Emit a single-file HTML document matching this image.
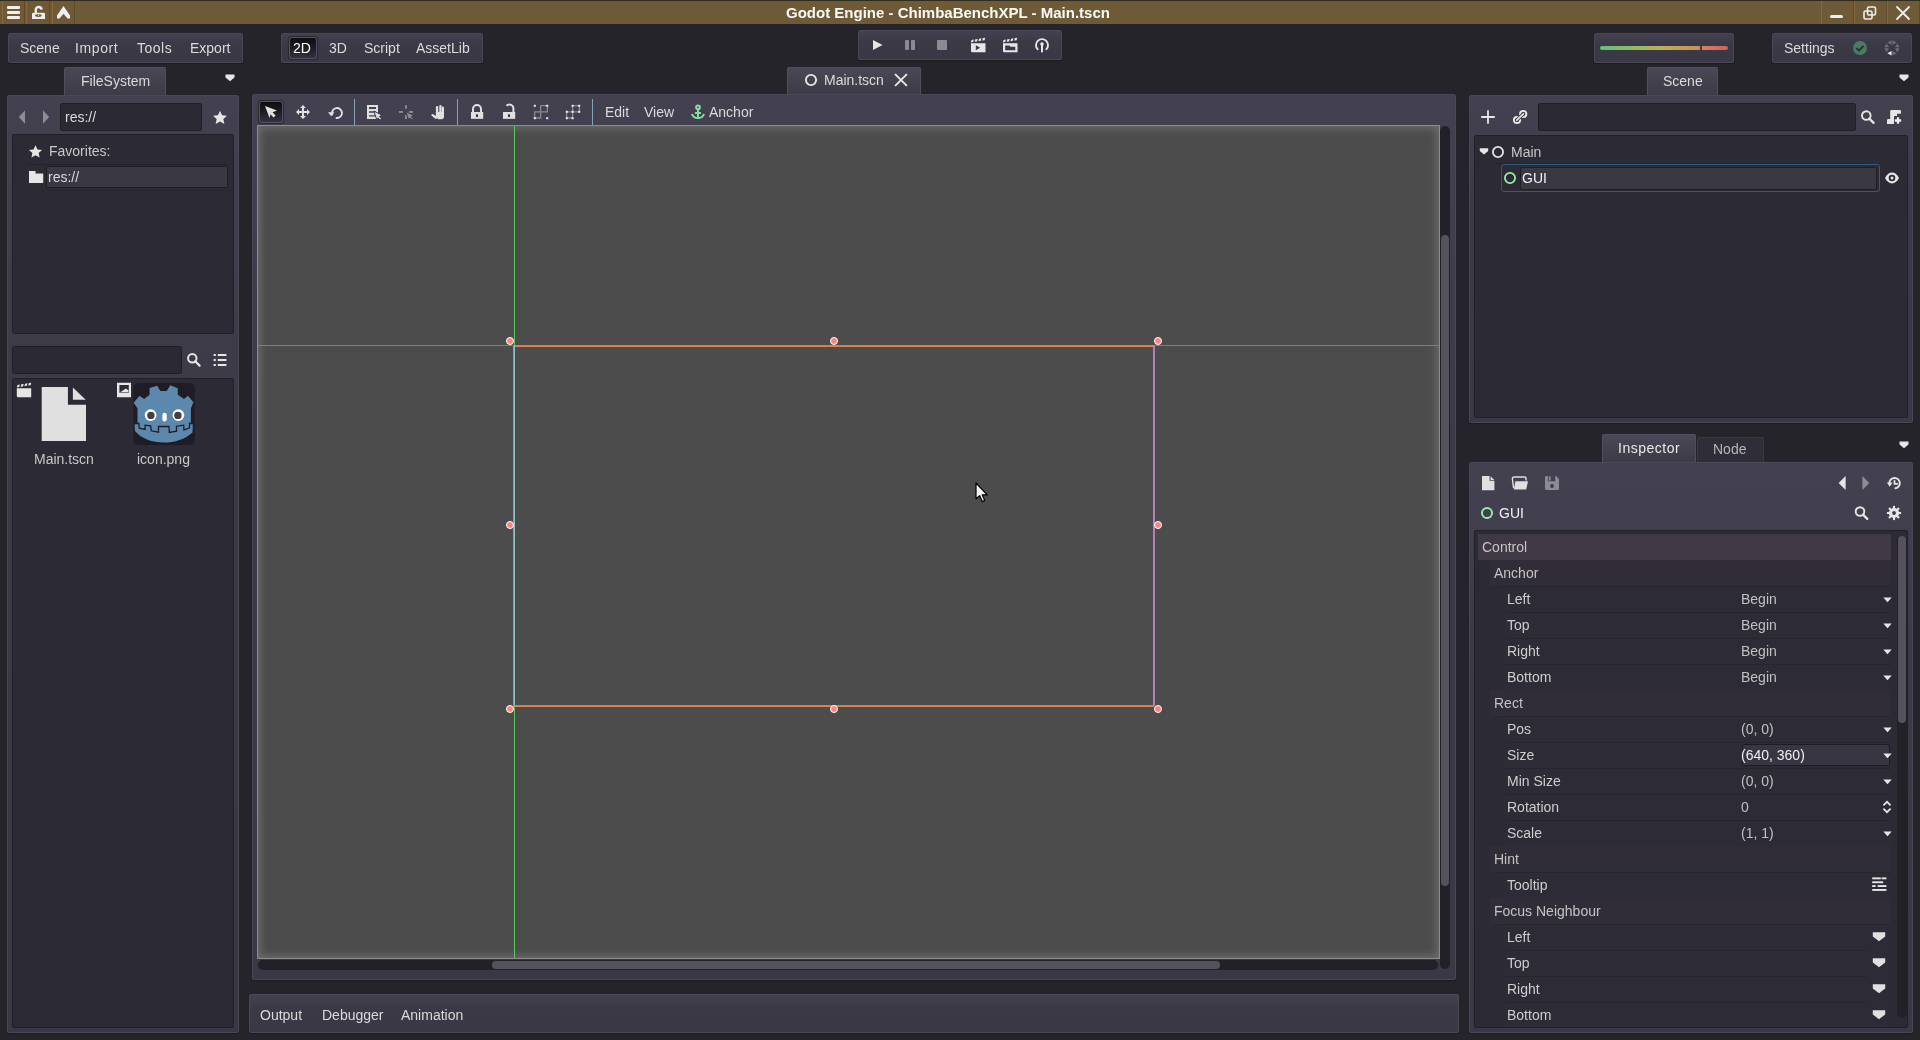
<!DOCTYPE html>
<html><head><meta charset="utf-8">
<style>
*{box-sizing:border-box}
html,body{margin:0;padding:0}
body{width:1920px;height:1040px;background:#25242a;position:relative;overflow:hidden;font-family:"Liberation Sans",sans-serif;font-size:14px;color:#dadada}
.a{position:absolute}
.t{position:absolute;line-height:16px;white-space:nowrap;z-index:3;will-change:transform}
.pnl{position:absolute;background:linear-gradient(#434050,#3c3946 40%,#3b3845);border:1px solid #4a4757;border-radius:2px;box-shadow:0 1px 1px #1c1b20}
.tab{position:absolute;background:linear-gradient(#4a4756,#3e3b48);border:1px solid #514e5e;border-bottom:none;border-radius:2px 2px 0 0}
.tree{position:absolute;background:#2c2a34;border:1px solid #222027;border-radius:2px}
.fld{position:absolute;background:#2b2933;border:1px solid #211f26;border-radius:2px}
.ibtn{position:absolute}
svg{position:absolute;overflow:visible;z-index:3}
.hd{position:absolute;width:8px;height:8px;border-radius:50%;background:#ff8282;border:1.3px solid #fff}
</style></head>
<body>
<!-- TITLE BAR -->
<div class="a" style="left:0;top:0;width:1920px;height:24px;background:#6e5a36;border-top:1px solid #2e2c1f"></div>
<div class="a" style="left:2px;top:1px;width:23px;height:23px;border-left:1px solid #86693c;border-right:1px solid #5c4a2c"></div>
<div class="a" style="left:26px;top:1px;width:24px;height:23px;border-left:1px solid #86693c;border-right:1px solid #5c4a2c"></div>
<div class="a" style="left:52px;top:1px;width:23px;height:23px;border-left:1px solid #86693c;border-right:1px solid #5c4a2c"></div>
<div class="a" style="left:1821px;top:1px;width:33px;height:23px;border-left:1px solid #86693c;border-right:1px solid #5c4a2c"></div>
<div class="a" style="left:1854px;top:1px;width:33px;height:23px;border-left:1px solid #86693c;border-right:1px solid #5c4a2c"></div>
<div class="a" style="left:1887px;top:1px;width:33px;height:23px;border-left:1px solid #86693c;border-right:1px solid #5c4a2c"></div>
<!-- hamburger -->
<div class="a" style="left:7px;top:6px;width:13px;height:3px;background:#eee;border-radius:1px"></div>
<div class="a" style="left:7px;top:11px;width:13px;height:3px;background:#eee;border-radius:1px"></div>
<div class="a" style="left:7px;top:16px;width:13px;height:3px;background:#eee;border-radius:1px"></div>
<!-- lock open -->
<svg style="left:32px;top:6px" width="14" height="14" viewBox="0 0 14 14"><path d="M3.8 7.5V3.6A2.6 2.6 0 0 1 6.4 1A3 3 0 0 1 9.6 3.6" fill="none" stroke="#eee" stroke-width="2.4"/><path d="M0 8.2A1.4 1.4 0 0 1 1.4 6.8H11.6A1.4 1.4 0 0 1 13 8.2V13H0Z" fill="#eee"/><ellipse cx="6.4" cy="9.6" rx="3.4" ry="1.3" fill="#6e5a36"/><circle cx="6.4" cy="9.6" r="0.6" fill="#eee"/></svg>
<!-- up arrow -->
<svg style="left:57px;top:6px" width="14" height="14" viewBox="0 0 14 14"><path d="M0 9.5L6.5 0L13 9.5V12.5H10.5L6.5 7.75L2.5 12.5H0Z" fill="#eee"/></svg>
<div class="t" style="left:786px;top:5px;font-weight:bold;font-size:15px;color:#fafafa">Godot Engine - ChimbaBenchXPL - Main.tscn</div>
<!-- window controls -->
<div class="a" style="left:1830px;top:15px;width:13px;height:3px;background:#eee;border-radius:2px"></div>
<svg style="left:1863px;top:6px" width="14" height="14" viewBox="0 0 14 14"><rect x="4.5" y="1" width="8" height="8" rx="1.5" fill="none" stroke="#eee" stroke-width="1.6"/><rect x="1" y="5" width="8" height="8" rx="1.5" fill="none" stroke="#eee" stroke-width="1.6"/></svg>
<svg style="left:1896px;top:6px" width="14" height="14" viewBox="0 0 14 14"><path d="M1 1L13 13M13 1L1 13" stroke="#eee" stroke-width="1.8" stroke-linecap="round"/></svg>

<!-- MENU ROW -->
<div class="pnl" style="left:8px;top:33px;width:235px;height:30px"></div>
<div class="t" style="left:20px;top:40px">Scene</div>
<div class="t" style="left:75px;top:40px;letter-spacing:0.6px">Import</div>
<div class="t" style="left:137px;top:40px;letter-spacing:0.5px">Tools</div>
<div class="t" style="left:190px;top:40px">Export</div>

<div class="pnl" style="left:281px;top:33px;width:202px;height:30px"></div>
<div class="a" style="left:289px;top:37px;width:28px;height:22px;background:linear-gradient(#0e0d11,#1b1a20 45%,#35323d);border:1px solid #54506a;border-radius:3px;box-shadow:0 0 1px 1px #2a2832"></div>
<div class="t" style="left:293px;top:40px;color:#fff">2D</div>
<div class="t" style="left:329px;top:40px">3D</div>
<div class="t" style="left:364px;top:40px">Script</div>
<div class="t" style="left:416px;top:40px">AssetLib</div>

<div class="pnl" style="left:858px;top:30px;width:204px;height:30px"></div>

<div class="pnl" style="left:1594px;top:33px;width:140px;height:30px"></div>
<div class="a" style="left:1600px;top:46px;width:100px;height:4px;border-radius:2px 0 0 2px;background:linear-gradient(90deg,#5fc27a,#b8b356 60%,#d3895a)"></div>
<div class="a" style="left:1702px;top:46px;width:26px;height:4px;border-radius:0 2px 2px 0;background:linear-gradient(90deg,#d3845a,#d2605e)"></div>

<div class="pnl" style="left:1772px;top:33px;width:140px;height:30px"></div>
<div class="t" style="left:1784px;top:40px">Settings</div>


<!-- PLAY ICONS -->
<svg style="left:872px;top:39px" width="12" height="12" viewBox="0 0 12 12"><path d="M1 1V11L10.5 6Z" fill="#e6e6e6"/></svg>
<div class="a" style="left:905px;top:40px;width:4px;height:10px;background:#8b8992;border-radius:1px"></div>
<div class="a" style="left:911px;top:40px;width:4px;height:10px;background:#8b8992;border-radius:1px"></div>
<div class="a" style="left:937px;top:40px;width:10px;height:10px;background:#8b8992;border-radius:1px"></div>
<svg style="left:970px;top:38px" width="16" height="16" viewBox="0 0 16 16"><g fill="#e6e6e6"><path d="M0.8 4.4L1.5 1.9L3.9 1.5L3.2 4Z M4.6 3.8L5.3 1.3L7.7 0.9L7 3.4Z M8.4 3.2L9.1 0.7L11.5 0.3L10.8 2.8Z M12.2 2.6L12.9 0.1L15.2 -0.2L14.6 2.2Z"/><path d="M1 5.2H15.5V14.2H2.2A1.2 1.2 0 0 1 1 13Z M5.8 7.2V12.2L10.2 9.7Z" fill-rule="evenodd"/></g></svg>
<svg style="left:1002px;top:38px" width="16" height="16" viewBox="0 0 16 16"><g fill="#e6e6e6"><path d="M0.8 4.4L1.5 1.9L3.9 1.5L3.2 4Z M4.6 3.8L5.3 1.3L7.7 0.9L7 3.4Z M8.4 3.2L9.1 0.7L11.5 0.3L10.8 2.8Z M12.2 2.6L12.9 0.1L15.2 -0.2L14.6 2.2Z"/><path d="M1 5.2H15.5V14.2H2.2A1.2 1.2 0 0 1 1 13Z M3.2 7.4V12.2H13.3V8.8H8.6L7.4 7.4Z" fill-rule="evenodd"/></g></svg>
<svg style="left:1034px;top:38px" width="16" height="16" viewBox="0 0 16 16"><path d="M3.6 11.2A6 6 0 1 1 12.4 11.2" fill="none" stroke="#e6e6e6" stroke-width="1.9" stroke-linecap="round"/><circle cx="8" cy="6" r="1.8" fill="#e6e6e6"/><rect x="7" y="6" width="2" height="8.6" rx="1" fill="#e6e6e6"/></svg>

<!-- settings icons -->
<svg style="left:1853px;top:41px" width="14" height="14" viewBox="0 0 14 14"><circle cx="7" cy="7" r="7" fill="#4a7b5e"/><path d="M3.4 7.2L5.9 9.6L10.6 4.8" fill="none" stroke="#2d2b33" stroke-width="1.8"/></svg>
<svg style="left:1880px;top:36px" width="30" height="24" viewBox="0 0 30 24"><path d="M7.40 6.60L11.54 4.30V8.90Z" fill="#6d6b77"/><path d="M16.60 6.60L12.46 4.30V8.90Z" fill="#6d6b77"/><path d="M6.60 7.20L4.30 11.34H8.90Z" fill="#6d6b77"/><path d="M17.30 7.20L15.00 11.34H19.60Z" fill="#6d6b77"/><path d="M6.60 16.40L4.30 12.26H8.90Z" fill="#6d6b77"/><path d="M17.30 16.40L15.00 12.26H19.60Z" fill="#6d6b77"/><path d="M7.40 17.20L11.54 14.90V19.50Z" fill="#eeeeee"/><path d="M16.60 17.20L12.46 14.90V19.50Z" fill="#6d6b77"/></svg>

<!-- dropdown arrows -->
<svg style="left:225px;top:74px" width="10" height="8" viewBox="0 0 10 8"><path d="M0.5 0.5H9.5V3.6L5 7.2L0.5 3.6Z" fill="#e6e6e6"/></svg>
<svg style="left:1899px;top:74px" width="10" height="8" viewBox="0 0 10 8"><path d="M0.5 0.5H9.5V3.6L5 7.2L0.5 3.6Z" fill="#e6e6e6"/></svg>
<svg style="left:1899px;top:441px" width="10" height="8" viewBox="0 0 10 8"><path d="M0.5 0.5H9.5V3.6L5 7.2L0.5 3.6Z" fill="#e6e6e6"/></svg>

<!-- tab icons -->
<svg style="left:804px;top:73px" width="14" height="14" viewBox="0 0 14 14"><circle cx="7" cy="7" r="5.1" fill="none" stroke="#e6e6e6" stroke-width="1.9"/></svg>
<svg style="left:894px;top:73px" width="14" height="14" viewBox="0 0 14 14"><path d="M1.6 1.6L12.4 12.4M12.4 1.6L1.6 12.4" stroke="#e6e6e6" stroke-width="1.9" stroke-linecap="round"/></svg>

<!-- DOCK TABS -->
<div class="tab" style="left:64px;top:67px;width:102px;height:28px"></div>
<div class="t" style="left:81px;top:73px">FileSystem</div>
<div class="tab" style="left:787px;top:67px;width:134px;height:27px"></div>
<div class="t" style="left:824px;top:72px">Main.tscn</div>
<div class="tab" style="left:1647px;top:67px;width:71px;height:28px"></div>
<div class="t" style="left:1663px;top:73px">Scene</div>

<!-- LEFT DOCK -->
<div class="pnl" style="left:7px;top:95px;width:232px;height:938px"></div>
<div class="fld" style="left:60px;top:103px;width:142px;height:28px"></div>
<div class="t" style="left:65px;top:109px">res://</div>
<div class="tree" style="left:12px;top:134px;width:222px;height:200px"></div>
<div class="t" style="left:49px;top:143px;color:#c8c8c8">Favorites:</div>
<div class="a" style="left:46px;top:166px;width:182px;height:22px;background:#3a3843;border:1px solid #1f1d25;border-radius:2px"></div>
<div class="t" style="left:48px;top:169px">res://</div>
<div class="fld" style="left:12px;top:346px;width:170px;height:28px"></div>
<div class="tree" style="left:12px;top:378px;width:222px;height:650px"></div>
<div class="t" style="left:34px;top:451px;color:#c8c8c8">Main.tscn</div>
<div class="t" style="left:137px;top:451px;color:#c8c8c8">icon.png</div>


<!-- LEFT DOCK ICONS -->
<svg style="left:18px;top:110px" width="8" height="14" viewBox="0 0 8 14"><path d="M7 0.2V13.8L0.8 7Z" fill="#8e8c94"/></svg>
<svg style="left:42px;top:110px" width="8" height="14" viewBox="0 0 8 14"><path d="M1 0.2V13.8L7.2 7Z" fill="#8e8c94"/></svg>
<svg style="left:212px;top:110px" width="16" height="15" viewBox="0 0 16 15"><path d="M8 0.8L10.1 5.3L15 5.8L11.3 9.1L12.4 14L8 11.5L3.6 14L4.7 9.1L1 5.8L5.9 5.3Z" fill="#e6e6e6"/></svg>
<svg style="left:28px;top:144px" width="15" height="15" viewBox="0 0 16 15"><path d="M8 0.8L10.1 5.3L15 5.8L11.3 9.1L12.4 14L8 11.5L3.6 14L4.7 9.1L1 5.8L5.9 5.3Z" fill="#e6e6e6"/></svg>
<svg style="left:28px;top:170px" width="16" height="14" viewBox="0 0 16 14"><path d="M1 1H7.5V3.5H15.2V13H1Z" fill="#e6e6e6"/></svg>
<div class="a" style="left:28px;top:164px;width:200px;height:1px;background:#25232b"></div>
<div class="a" style="left:28px;top:190px;width:200px;height:1px;background:#2a2830"></div>
<svg style="left:186px;top:352px" width="16" height="16" viewBox="0 0 16 16"><circle cx="6.3" cy="6.3" r="4.2" fill="none" stroke="#e6e6e6" stroke-width="2"/><path d="M9.2 9.2L13.6 13.6" stroke="#e6e6e6" stroke-width="2.2" stroke-linecap="round"/></svg>
<svg style="left:212px;top:352px" width="16" height="16" viewBox="0 0 16 16"><g fill="#e6e6e6"><rect x="1.6" y="2" width="2.2" height="2"/><rect x="5.8" y="2" width="8.6" height="2"/><rect x="1.6" y="7" width="2.2" height="2"/><rect x="5.8" y="7" width="8.6" height="2"/><rect x="1.6" y="12" width="2.2" height="2"/><rect x="5.8" y="12" width="8.6" height="2"/></g></svg>
<!-- files -->
<svg style="left:16px;top:383px" width="16" height="15" viewBox="0 0 16 15"><g fill="#e6e6e6"><path d="M0.8 4.4L1.5 1.9L3.9 1.5L3.2 4Z M4.6 3.8L5.3 1.3L7.7 0.9L7 3.4Z M8.4 3.2L9.1 0.7L11.5 0.3L10.8 2.8Z M12.2 2.6L12.9 0.1L15.2 -0.2L14.6 2.2Z"/><path d="M0.8 5.2H15.2V14.3H2.2A1.4 1.4 0 0 1 0.8 12.9Z"/></g></svg>
<svg style="left:41px;top:386px" width="46" height="56" viewBox="0 0 46 56"><path d="M0.7 1H26.9V18.7H45V55H0.7Z" fill="#e0e0e0"/><path d="M31.9 1.4V13.8H44.7Z" fill="#e0e0e0"/></svg>
<svg style="left:116px;top:382px" width="16" height="16" viewBox="0 0 16 16"><path d="M1 0.8H15V15.3H1Z M3.4 3V10.8H12.8V3Z" fill="#e6e6e6" fill-rule="evenodd"/><path d="M4.2 10.2L9.8 6.4L12.4 8.2V10.2Z" fill="#e6e6e6"/></svg>
<svg style="left:133px;top:383px" width="62" height="62" viewBox="0 0 62 62"><rect x="0.3" y="0" width="61.4" height="62" rx="5.5" fill="#1f1c25"/>
<path d="M16.6 5L24.2 2.7L27.4 7.9H33.7L37.3 2.3L44.8 5.3V11.8L51 16.1L54.9 12.8L60.5 19.3L57.9 25.2V40.3L59.8 40.9L59.5 49.4C52 56 42 59.6 30.7 59.6C19 59.6 9 56 1.9 48.1L1.6 40.9L4.5 40.3V25.2L0.6 19.7L6.5 12.8L11.1 16.1L16.6 11.8Z" fill="#5c88ad"/>
<path d="M1.6 40.9L5.9 40.3L6.2 45.2L12.1 46.5L12.1 42.2L17.6 42.9L18.3 47.8L25.5 49.1L25.5 43.5L36 43.5L36.3 49.4L43.5 48.1L43.5 43.2L50.7 42.2L51 47.1L56.5 44.8L56.5 40.3L59.8 40.9" fill="none" stroke="#1f1c25" stroke-width="1.3"/>
<circle cx="17.6" cy="32.1" r="5.9" fill="#fff"/><circle cx="17.9" cy="32.4" r="3.7" fill="#414042"/>
<circle cx="45.4" cy="32.1" r="5.9" fill="#fff"/><circle cx="44.9" cy="32.4" r="3.7" fill="#414042"/>
<rect x="29.4" y="29.8" width="4.3" height="8.8" rx="2.1" fill="#fff"/></svg>

<!-- CENTER -->
<div class="pnl" style="left:252px;top:94px;width:1204px;height:886px"></div>
<div class="a" style="left:259px;top:101px;width:24px;height:22px;background:linear-gradient(#0e0d11,#1b1a20 45%,#35323d);border:1px solid #54506a;border-radius:3px;box-shadow:0 0 1px 1px #2a2832"></div>
<div class="t" style="left:605px;top:104px">Edit</div>
<div class="t" style="left:644px;top:104px">View</div>
<div class="t" style="left:709px;top:104px">Anchor</div>
<div id="vp" class="a" style="left:257px;top:125px;width:1183px;height:834px;background:#4c4c4c;border:1px solid #8c8c8c;box-shadow:inset 0 0 9px 2px rgba(125,125,125,0.7)"></div>
<!-- scrollbars -->
<div class="a" style="left:1440px;top:126px;width:10px;height:843px;background:#222127;border-radius:5px"></div>
<div class="a" style="left:1441px;top:235px;width:8px;height:651px;background:#55525e;border-radius:4px"></div>
<div class="a" style="left:258px;top:960px;width:1180px;height:10px;background:#222127;border-radius:5px"></div>
<div class="a" style="left:492px;top:961px;width:728px;height:8px;background:#55525e;border-radius:4px"></div>


<!-- TOOLBAR ICONS -->
<svg style="left:263px;top:104px" width="16" height="16" viewBox="0 0 16 16"><path d="M2 2L14 6.5L9.6 8.3L12.6 11.4L10.5 13.4L7.6 10.3L6.5 14Z" fill="#e0e0e0"/></svg>
<svg style="left:295px;top:104px" width="16" height="16" viewBox="0 0 16 16"><path d="M8 1L11 4H9V7H12V5L15 8L12 11V9H9V12H11L8 15L5 12H7V9H4V11L1 8L4 5V7H7V4H5Z" fill="#e0e0e0"/></svg>
<svg style="left:327px;top:104px" width="16" height="16" viewBox="0 0 16 16"><path d="M5.2 10.5A5 5 0 1 1 9.5 14" fill="none" stroke="#e0e0e0" stroke-width="1.9" stroke-linecap="round"/><path d="M1 8.2H7.4L4.2 12.2Z" fill="#e0e0e0"/></svg>
<div class="a" style="left:354px;top:99px;width:1px;height:26px;background:#84a3b8"></div>
<svg style="left:366px;top:104px" width="16" height="16" viewBox="0 0 16 16"><path d="M1 1H12V15H1Z M3 3V5H10V3Z M3 7.3V8.7H10V7.3Z M3 11.2V12.6H10V11.2Z" fill="#e0e0e0" fill-rule="evenodd"/><path d="M7.8 7L16.2 11.3L13.4 12.5L15.4 14.5L14 15.9L12 13.9L11 16.4Z" fill="#e0e0e0" stroke="#3d3a47" stroke-width="1" stroke-linejoin="round"/></svg>
<svg style="left:398px;top:104px" width="16" height="16" viewBox="0 0 16 16"><g fill="#8d8b93"><rect x="7" y="1.2" width="1.9" height="3.5"/><rect x="0.9" y="7" width="4" height="1.9"/><rect x="11" y="7" width="4" height="1.9"/><rect x="7" y="11.2" width="1.9" height="3.8"/></g><path d="M7.8 7.6L16 11.6L13.2 12.7L15.2 14.7L13.9 16L11.9 14L10.9 16.6Z" fill="#8d8b93" stroke="#3d3a47" stroke-width="0.9" stroke-linejoin="round"/></svg>
<svg style="left:430px;top:104px" width="16" height="16" viewBox="0 0 16 16"><g fill="#e0e0e0"><rect x="5.9" y="2" width="2.4" height="9" rx="1.1"/><rect x="9.3" y="1" width="2.3" height="10" rx="1.1"/><rect x="11.8" y="2.6" width="2.2" height="9" rx="1.1"/><path d="M5.9 8H14V12.6A2.6 2.6 0 0 1 11.4 15.2H8.2L5.9 13Z"/><path d="M1.4 11.6A1.2 1.2 0 0 1 3.2 10.2L6.8 12.6V14.8L5.6 15Z"/></g></svg>
<div class="a" style="left:457px;top:99px;width:1px;height:26px;background:#84a3b8"></div>
<svg style="left:469px;top:104px" width="16" height="16" viewBox="0 0 16 16"><path d="M4 8.5V5a4 4 0 0 1 8 0V8.5" fill="none" stroke="#e0e0e0" stroke-width="2"/><rect x="2" y="8" width="12.2" height="6.8" fill="#e0e0e0"/><rect x="7" y="10.4" width="2" height="2.5" fill="#2a2830"/></svg>
<svg style="left:501px;top:104px" width="16" height="16" viewBox="0 0 16 16"><path d="M5.5 1.8A4 4 0 0 1 12.4 5V8.5" fill="none" stroke="#e0e0e0" stroke-width="2"/><rect x="2" y="8" width="12.2" height="6.8" fill="#e0e0e0"/><rect x="7" y="10.4" width="2" height="2.5" fill="#2a2830"/></svg>
<svg style="left:533px;top:104px" width="16" height="16" viewBox="0 0 16 16"><g fill="none" stroke="#8b8a90" stroke-width="1.3"><path d="M7.6 1.6H14.4V7.8H1.6V14H7.6V1.6"/></g><g fill="#f0f0f0"><rect x="0.8" y="0.8" width="2" height="2"/><rect x="13.2" y="0.8" width="2" height="2"/><rect x="0.8" y="13.2" width="2" height="2"/><rect x="13.2" y="13.2" width="2" height="2"/></g></svg>
<svg style="left:565px;top:104px" width="16" height="16" viewBox="0 0 16 16"><g fill="none" stroke="#8b8a90" stroke-width="1.3"><path d="M7.6 1.6H14.4V7.8H1.6V14H7.6V1.6"/></g><g fill="#f0f0f0"><rect x="6.6" y="0.8" width="2" height="2"/><rect x="13.2" y="0.8" width="2" height="2"/><rect x="0.8" y="6.8" width="2" height="2"/><rect x="6.6" y="6.8" width="2" height="2"/><rect x="13.2" y="6.8" width="2" height="2"/><rect x="0.8" y="13.2" width="2" height="2"/><rect x="6.6" y="13.2" width="2" height="2"/></g></svg>
<div class="a" style="left:592px;top:99px;width:1px;height:26px;background:#84a3b8"></div>
<svg style="left:690px;top:104px" width="16" height="16" viewBox="0 0 16 16"><g fill="none" stroke="#84e0a2" stroke-width="2"><circle cx="8" cy="3.3" r="1.9"/><path d="M8 5.2V14.6M5 9H11M2 10A6.2 5.5 0 0 0 14 10"/></g></svg>

<!-- VIEWPORT CONTENT -->
<div class="a" style="left:258px;top:345px;width:1181px;height:1px;background:#d45b5b"></div>
<div class="a" style="left:514px;top:126px;width:1px;height:832px;background:#5cc85c"></div>
<div class="a" style="left:513px;top:346px;width:641px;height:361px;border:1px solid #d9864f"></div>
<div class="a" style="left:514px;top:345px;width:641px;height:361px;border:1px solid #b27ab6;border-left-color:#8dc0c8"></div>
<div class="hd" style="left:506px;top:337px"></div>
<div class="hd" style="left:830px;top:337px"></div>
<div class="hd" style="left:1154px;top:337px"></div>
<div class="hd" style="left:506px;top:521px"></div>
<div class="hd" style="left:1154px;top:521px"></div>
<div class="hd" style="left:506px;top:705px"></div>
<div class="hd" style="left:830px;top:705px"></div>
<div class="hd" style="left:1154px;top:705px"></div>
<svg style="left:975px;top:482px" width="14" height="22" viewBox="0 0 14 22"><path d="M1 1V17L4.6 13.6L7.3 19.6L9.7 18.5L7.2 12.8H12.2Z" fill="#f4f4f4" stroke="#000" stroke-width="1.2" stroke-linejoin="round"/></svg>

<!-- BOTTOM PANEL -->
<div class="pnl" style="left:249px;top:994px;width:1210px;height:39px"></div>
<div class="t" style="left:260px;top:1007px">Output</div>
<div class="t" style="left:322px;top:1007px">Debugger</div>
<div class="t" style="left:401px;top:1007px">Animation</div>

<!-- RIGHT: SCENE DOCK -->
<div class="pnl" style="left:1469px;top:95px;width:444px;height:328px"></div>
<div class="fld" style="left:1538px;top:103px;width:318px;height:28px"></div>
<div class="tree" style="left:1474px;top:135px;width:434px;height:283px"></div>
<div class="t" style="left:1511px;top:144px;color:#c8c8c8">Main</div>
<div class="a" style="left:1501px;top:164px;width:379px;height:28px;border:1px solid #2e5b85;border-radius:3px"></div>
<div class="a" style="left:1520px;top:167px;width:357px;height:23px;background:#3a3843;border:1px solid #1f1d25;border-radius:2px"></div>
<div class="t" style="left:1522px;top:170px;color:#f2f2f2">GUI</div>

<!-- INSPECTOR TABS -->
<div class="tab" style="left:1602px;top:434px;width:94px;height:28px"></div>
<div class="t" style="left:1618px;top:440px;letter-spacing:0.5px;color:#e8e8e8">Inspector</div>
<div class="a" style="left:1697px;top:437px;width:67px;height:25px;background:#2f2d38;border:1px solid #3a3844;border-bottom:none;border-radius:2px 2px 0 0"></div>
<div class="t" style="left:1713px;top:441px;color:#b6b6b6">Node</div>

<!-- INSPECTOR -->
<div class="pnl" style="left:1469px;top:462px;width:444px;height:571px"></div>
<div class="t" style="left:1499px;top:505px;color:#f2f2f2">GUI</div>
<div class="tree" style="left:1474px;top:530px;width:434px;height:498px"></div>

<!-- SCENE DOCK ICONS -->
<svg style="left:1480px;top:109px" width="16" height="16" viewBox="0 0 16 16"><path d="M8 1.2V14.8M1.2 8H14.8" stroke="#e6e6e6" stroke-width="1.8"/></svg>
<svg style="left:1512px;top:109px" width="16" height="16" viewBox="0 0 16 16"><g fill="none"><circle cx="11.2" cy="5" r="3.1" stroke="#e6e6e6" stroke-width="2"/><circle cx="5" cy="11" r="3.1" stroke="#e6e6e6" stroke-width="2"/><path d="M4.8 11.2L11.4 4.8" stroke="#3e3b48" stroke-width="3.4" stroke-linecap="round"/><path d="M4.8 11.2L11.4 4.8" stroke="#e6e6e6" stroke-width="1.7" stroke-linecap="round"/></g></svg>
<svg style="left:1859px;top:109px" width="16" height="16" viewBox="0 0 16 16"><circle cx="7.3" cy="6.5" r="4.3" fill="none" stroke="#e6e6e6" stroke-width="1.9"/><path d="M10.3 9.6L14.6 13.9" stroke="#e6e6e6" stroke-width="2.2" stroke-linecap="round"/></svg>
<svg style="left:1886px;top:108px" width="18" height="18" viewBox="0 0 18 18"><g fill="#e6e6e6"><path d="M4.2 3.2A1.2 1.2 0 0 1 5.4 2H13.9A1.1 1.1 0 0 1 15 3.1V5.8H11V8H8V16H1V12.2A1.2 1.2 0 0 1 2.2 11H4.2Z"/></g><path d="M12 8.6V16.4M8.1 12.5H15.9" stroke="#3d3a47" stroke-width="4.6"/><path d="M12 9.3V15.7M8.8 12.5H15.2" stroke="#eeeeee" stroke-width="2.3"/></svg>
<svg style="left:1479px;top:147px" width="10" height="9" viewBox="0 0 10 9"><path d="M0.8 1.2H9.2V4L5 7.6L0.8 4Z" fill="#e6e6e6"/></svg>
<svg style="left:1491px;top:145px" width="14" height="14" viewBox="0 0 14 14"><circle cx="7" cy="7" r="5.1" fill="none" stroke="#e6e6e6" stroke-width="1.8"/></svg>
<div class="a" style="left:1495px;top:163px;width:370px;height:1px;background:#25232b"></div>
<svg style="left:1503px;top:171px" width="14" height="14" viewBox="0 0 14 14"><circle cx="7" cy="7" r="5.1" fill="none" stroke="#96efa9" stroke-width="1.8"/></svg>
<svg style="left:1884px;top:171px" width="16" height="14" viewBox="0 0 16 14"><path d="M1 7C3 3.2 5.4 1.6 8 1.6S13 3.2 15 7C13 10.8 10.6 12.4 8 12.4S3 10.8 1 7Z" fill="#e6e6e6"/><circle cx="8" cy="7" r="3.3" fill="#2b2932"/><circle cx="8" cy="7" r="1.5" fill="#e6e6e6"/></svg>

<!-- INSPECTOR ICONS -->
<svg style="left:1481px;top:475px" width="15" height="16" viewBox="0 0 15 16"><path d="M1 1H8.6V5.8H13.4V15.2H1Z" fill="#e0e0e0"/><path d="M9.6 1.3L13.3 4.9H9.6Z" fill="#e0e0e0"/></svg>
<svg style="left:1511px;top:475px" width="18" height="16" viewBox="0 0 18 16"><path d="M2.6 13.2L1.4 3.8A1.6 1.6 0 0 1 3 2H13.5A1.4 1.4 0 0 1 15 3.4V5.4" fill="none" stroke="#e0e0e0" stroke-width="1.4"/><path d="M4.4 6.2H17L15.2 14.6H2.8Z" fill="#e0e0e0"/></svg>
<svg style="left:1544px;top:475px" width="16" height="16" viewBox="0 0 16 16"><path d="M1 2.4A1.5 1.5 0 0 1 2.5 0.9H12L15 3.9V13.6A1.5 1.5 0 0 1 13.5 15.1H2.5A1.5 1.5 0 0 1 1 13.6Z M3.9 0.9V6.3H11.2V0.9Z" fill="#8d8b93" fill-rule="evenodd"/><rect x="4.8" y="1.4" width="1.8" height="4.2" fill="#8d8b93"/><circle cx="8" cy="11" r="1.9" fill="#3d3a47"/></svg>
<svg style="left:1837px;top:475px" width="10" height="16" viewBox="0 0 10 16"><path d="M8.6 1V15L1.6 8Z" fill="#e6e6e6"/></svg>
<svg style="left:1861px;top:475px" width="10" height="16" viewBox="0 0 10 16"><path d="M1.4 1V15L8.4 8Z" fill="#8d8b93"/></svg>
<svg style="left:1886px;top:475px" width="16" height="16" viewBox="0 0 16 16"><path d="M3.4 7.6A5.2 5.2 0 1 1 9.4 13.3" fill="none" stroke="#e6e6e6" stroke-width="1.9" stroke-linecap="round"/><path d="M0.9 7.5H6.5L3.7 11.8Z" fill="#e6e6e6"/><path d="M8.5 5.2V8.8H11.8" fill="none" stroke="#e6e6e6" stroke-width="1.8"/></svg>
<svg style="left:1480px;top:506px" width="14" height="14" viewBox="0 0 14 14"><circle cx="7" cy="7" r="5.05" fill="none" stroke="#96efa9" stroke-width="1.9"/></svg>
<svg style="left:1853px;top:505px" width="16" height="16" viewBox="0 0 16 16"><circle cx="7" cy="6.5" r="4.3" fill="none" stroke="#e6e6e6" stroke-width="1.9"/><path d="M10 9.6L14.3 13.9" stroke="#e6e6e6" stroke-width="2.2" stroke-linecap="round"/></svg>
<svg style="left:1886px;top:505px" width="16" height="16" viewBox="0 0 16 16"><circle cx="8" cy="8" r="5.1" fill="#e6e6e6"/><rect x="6.95" y="0.9000000000000004" width="2.1" height="4" fill="#e6e6e6" transform="rotate(0 8 8)"/><rect x="6.95" y="0.9000000000000004" width="2.1" height="4" fill="#e6e6e6" transform="rotate(45 8 8)"/><rect x="6.95" y="0.9000000000000004" width="2.1" height="4" fill="#e6e6e6" transform="rotate(90 8 8)"/><rect x="6.95" y="0.9000000000000004" width="2.1" height="4" fill="#e6e6e6" transform="rotate(135 8 8)"/><rect x="6.95" y="0.9000000000000004" width="2.1" height="4" fill="#e6e6e6" transform="rotate(180 8 8)"/><rect x="6.95" y="0.9000000000000004" width="2.1" height="4" fill="#e6e6e6" transform="rotate(225 8 8)"/><rect x="6.95" y="0.9000000000000004" width="2.1" height="4" fill="#e6e6e6" transform="rotate(270 8 8)"/><rect x="6.95" y="0.9000000000000004" width="2.1" height="4" fill="#e6e6e6" transform="rotate(315 8 8)"/><circle cx="8" cy="8" r="1.9" fill="#3d3a47"/></svg>
<!-- PROPERTY LIST -->
<div class="a" style="left:1475px;top:531px;width:433px;height:496px;overflow:hidden;z-index:1">
<div class="a" style="left:3px;top:3px;width:413px;height:26px;background:#3f3946"></div>
<div class="t" style="left:7px;top:8px;color:#c4c4c4">Control</div>
<div class="a" style="left:15px;top:29px;width:401px;height:26px;background:#302d38"></div>
<div class="t" style="left:19px;top:34px;color:#c4c4c4">Anchor</div>
<div class="a" style="left:27px;top:55px;width:389px;height:26px;background:#2d2b35"></div>
<div class="a" style="left:19px;top:55px;width:397px;height:1px;background:#27252d"></div>
<div class="t" style="left:32px;top:60px;color:#cdcdcd">Left</div>
<div class="t" style="left:266px;top:60px;color:#c0c0c0">Begin</div>
<svg style="left:408px;top:66px" width="9" height="6" viewBox="0 0 9 6"><path d="M0.3 0.6H8.7L4.5 5.2Z" fill="#e6e6e6"/></svg>
<div class="a" style="left:27px;top:81px;width:389px;height:26px;background:#2d2b35"></div>
<div class="a" style="left:31px;top:81px;width:385px;height:1px;background:#27252d"></div>
<div class="t" style="left:32px;top:86px;color:#cdcdcd">Top</div>
<div class="t" style="left:266px;top:86px;color:#c0c0c0">Begin</div>
<svg style="left:408px;top:92px" width="9" height="6" viewBox="0 0 9 6"><path d="M0.3 0.6H8.7L4.5 5.2Z" fill="#e6e6e6"/></svg>
<div class="a" style="left:27px;top:107px;width:389px;height:26px;background:#2d2b35"></div>
<div class="a" style="left:31px;top:107px;width:385px;height:1px;background:#27252d"></div>
<div class="t" style="left:32px;top:112px;color:#cdcdcd">Right</div>
<div class="t" style="left:266px;top:112px;color:#c0c0c0">Begin</div>
<svg style="left:408px;top:118px" width="9" height="6" viewBox="0 0 9 6"><path d="M0.3 0.6H8.7L4.5 5.2Z" fill="#e6e6e6"/></svg>
<div class="a" style="left:27px;top:133px;width:389px;height:26px;background:#2d2b35"></div>
<div class="a" style="left:31px;top:133px;width:385px;height:1px;background:#27252d"></div>
<div class="t" style="left:32px;top:138px;color:#cdcdcd">Bottom</div>
<div class="t" style="left:266px;top:138px;color:#c0c0c0">Begin</div>
<svg style="left:408px;top:144px" width="9" height="6" viewBox="0 0 9 6"><path d="M0.3 0.6H8.7L4.5 5.2Z" fill="#e6e6e6"/></svg>
<div class="a" style="left:15px;top:159px;width:401px;height:26px;background:#302d38"></div>
<div class="t" style="left:19px;top:164px;color:#c4c4c4">Rect</div>
<div class="a" style="left:27px;top:185px;width:389px;height:26px;background:#2d2b35"></div>
<div class="a" style="left:19px;top:185px;width:397px;height:1px;background:#27252d"></div>
<div class="t" style="left:32px;top:190px;color:#cdcdcd">Pos</div>
<div class="t" style="left:266px;top:190px;color:#c0c0c0">(0, 0)</div>
<svg style="left:408px;top:196px" width="9" height="6" viewBox="0 0 9 6"><path d="M0.3 0.6H8.7L4.5 5.2Z" fill="#e6e6e6"/></svg>
<div class="a" style="left:27px;top:211px;width:389px;height:26px;background:#2d2b35"></div>
<div class="a" style="left:31px;top:211px;width:385px;height:1px;background:#27252d"></div>
<div class="t" style="left:32px;top:216px;color:#cdcdcd">Size</div>
<div class="a" style="left:267px;top:213px;width:148px;height:22px;background:#393643;border:1px solid #1d1c22;border-radius:2px"></div>
<div class="t" style="left:266px;top:216px;color:#f0f0f0">(640, 360)</div>
<svg style="left:408px;top:222px" width="9" height="6" viewBox="0 0 9 6"><path d="M0.3 0.6H8.7L4.5 5.2Z" fill="#e6e6e6"/></svg>
<div class="a" style="left:27px;top:237px;width:389px;height:26px;background:#2d2b35"></div>
<div class="a" style="left:31px;top:237px;width:385px;height:1px;background:#27252d"></div>
<div class="t" style="left:32px;top:242px;color:#cdcdcd">Min Size</div>
<div class="t" style="left:266px;top:242px;color:#c0c0c0">(0, 0)</div>
<svg style="left:408px;top:248px" width="9" height="6" viewBox="0 0 9 6"><path d="M0.3 0.6H8.7L4.5 5.2Z" fill="#e6e6e6"/></svg>
<div class="a" style="left:27px;top:263px;width:389px;height:26px;background:#2d2b35"></div>
<div class="a" style="left:31px;top:263px;width:385px;height:1px;background:#27252d"></div>
<div class="t" style="left:32px;top:268px;color:#cdcdcd">Rotation</div>
<div class="t" style="left:266px;top:268px;color:#c0c0c0">0</div>
<svg style="left:407px;top:269px" width="10" height="14" viewBox="0 0 10 14"><path d="M1.4 5.4L5 1.8L8.6 5.4M1.4 8.6L5 12.2L8.6 8.6" fill="none" stroke="#e6e6e6" stroke-width="1.7"/></svg>
<div class="a" style="left:27px;top:289px;width:389px;height:26px;background:#2d2b35"></div>
<div class="a" style="left:31px;top:289px;width:385px;height:1px;background:#27252d"></div>
<div class="t" style="left:32px;top:294px;color:#cdcdcd">Scale</div>
<div class="t" style="left:266px;top:294px;color:#c0c0c0">(1, 1)</div>
<svg style="left:408px;top:300px" width="9" height="6" viewBox="0 0 9 6"><path d="M0.3 0.6H8.7L4.5 5.2Z" fill="#e6e6e6"/></svg>
<div class="a" style="left:15px;top:315px;width:401px;height:26px;background:#302d38"></div>
<div class="t" style="left:19px;top:320px;color:#c4c4c4">Hint</div>
<div class="a" style="left:27px;top:341px;width:389px;height:26px;background:#2d2b35"></div>
<div class="a" style="left:19px;top:341px;width:397px;height:1px;background:#27252d"></div>
<div class="t" style="left:32px;top:346px;color:#cdcdcd">Tooltip</div>
<svg style="left:397px;top:346px" width="15" height="16" viewBox="0 0 15 16"><g fill="#e6e6e6"><rect x="0.2" y="0.4" width="8.6" height="1.9"/><rect x="9.6" y="0.4" width="4.8" height="1.9"/><rect x="0.2" y="4.3" width="11" height="1.9"/><rect x="0.2" y="8.1" width="3.4" height="1.9"/><rect x="5.6" y="8.1" width="8.8" height="1.9"/><rect x="0.2" y="12" width="14.2" height="1.9"/></g></svg>
<div class="a" style="left:15px;top:367px;width:401px;height:26px;background:#302d38"></div>
<div class="t" style="left:19px;top:372px;color:#c4c4c4">Focus Neighbour</div>
<div class="a" style="left:27px;top:393px;width:389px;height:26px;background:#2d2b35"></div>
<div class="a" style="left:19px;top:393px;width:397px;height:1px;background:#27252d"></div>
<div class="t" style="left:32px;top:398px;color:#cdcdcd">Left</div>
<svg style="left:397px;top:400px" width="14" height="11" viewBox="0 0 14 11"><path d="M0.8 1.2H13.2V5.4L7 10.2L0.8 5.4Z" fill="#e0e0e0"/></svg>
<div class="a" style="left:27px;top:419px;width:389px;height:26px;background:#2d2b35"></div>
<div class="a" style="left:31px;top:419px;width:361px;height:1px;background:#27252d"></div>
<div class="t" style="left:32px;top:424px;color:#cdcdcd">Top</div>
<svg style="left:397px;top:426px" width="14" height="11" viewBox="0 0 14 11"><path d="M0.8 1.2H13.2V5.4L7 10.2L0.8 5.4Z" fill="#e0e0e0"/></svg>
<div class="a" style="left:27px;top:445px;width:389px;height:26px;background:#2d2b35"></div>
<div class="a" style="left:31px;top:445px;width:361px;height:1px;background:#27252d"></div>
<div class="t" style="left:32px;top:450px;color:#cdcdcd">Right</div>
<svg style="left:397px;top:452px" width="14" height="11" viewBox="0 0 14 11"><path d="M0.8 1.2H13.2V5.4L7 10.2L0.8 5.4Z" fill="#e0e0e0"/></svg>
<div class="a" style="left:27px;top:471px;width:389px;height:26px;background:#2d2b35"></div>
<div class="a" style="left:31px;top:471px;width:361px;height:1px;background:#27252d"></div>
<div class="t" style="left:32px;top:476px;color:#cdcdcd">Bottom</div>
<svg style="left:397px;top:478px" width="14" height="11" viewBox="0 0 14 11"><path d="M0.8 1.2H13.2V5.4L7 10.2L0.8 5.4Z" fill="#e0e0e0"/></svg>
</div>
<div class="a" style="left:1897px;top:536px;width:10px;height:482px;background:#222127;border-radius:5px;z-index:2"></div>
<div class="a" style="left:1898px;top:536px;width:8px;height:187px;background:#55525e;border-radius:4px;z-index:2"></div>
</body></html>
